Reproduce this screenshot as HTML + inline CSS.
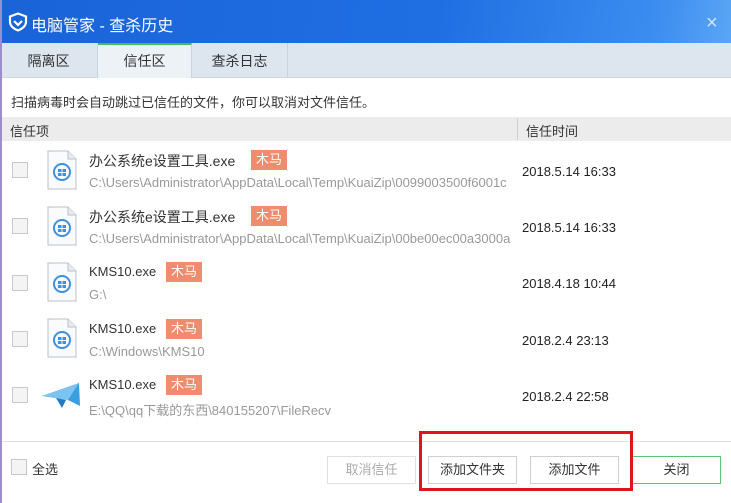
<!DOCTYPE html>
<html><head><meta charset="utf-8"><style>
*{margin:0;padding:0;box-sizing:border-box}
body{width:731px;height:503px;position:relative;overflow:hidden;background:#fff;font-family:"Liberation Sans","Noto Sans CJK SC",sans-serif;font-size:13px;color:#333}
.a{position:absolute;white-space:nowrap}
.title{left:0;top:0;width:731px;height:43px;background:linear-gradient(100deg,#1a63d8 0%,#1f6fe3 60%,#3d8ef0 90%,#5aa5f5 100%)}
.tabs{left:0;top:43px;width:731px;height:35px;background:#dde6ef;border-bottom:1px solid #cfd8e2}
.tab{top:43px;height:35px;line-height:36px;text-align:center;font-size:14px;color:#333}
.cb{width:16px;height:16px;border:1px solid #c8c8c8;background:#f4f4f4}
.tag{background:#f08c6e;color:#fff;font-size:13px;height:20px;line-height:20px;padding:0 5px}
.nm{font-size:14px;color:#333}
.nm2{font-size:13px;color:#333}
.pt{font-size:13px;color:#999;width:428px;overflow:hidden}
.dt{font-size:13px;color:#222}
.btn{top:456px;height:28px;line-height:26px;width:89px;text-align:center;border:1px solid #cfcfcf;background:#fff;font-size:13px}
</style></head><body>
<div class="a" style="left:0;top:0;width:2px;height:503px;background:#9c8fc9;z-index:5"></div>
<div class="a title"></div>
<svg class="a" style="left:8px;top:12px" width="20" height="20" viewBox="0 0 20 20"><path d="M10 1.5 L18 4.5 V10 C18 14 14 17 10 18.5 C6 17 2 14 2 10 V4.5Z" fill="none" stroke="#fff" stroke-width="2.2"/><path d="M6 9 L10 13 L14 9" fill="none" stroke="#fff" stroke-width="2.2"/></svg>
<div class="a" style="left:31px;top:12px;color:#fff;font-size:16px">电脑管家 - 查杀历史</div>
<div class="a" style="left:706px;top:12px;color:#cfe2fb;font-size:20px;font-weight:300">×</div>
<div class="a tabs"></div>
<div class="a tab" style="left:0;width:98px;border-right:1px solid #c9d3de">隔离区</div>
<div class="a tab" style="left:98px;width:94px;background:#edf2f7;border-top:2px solid #4cba5a;border-right:1px solid #c9d3de;line-height:33px">信任区</div>
<div class="a tab" style="left:192px;width:96px;border-right:1px solid #c9d3de">查杀日志</div>
<div class="a" style="left:11px;top:92px;font-size:13px">扫描病毒时会自动跳过已信任的文件，你可以取消对文件信任。</div>
<div class="a" style="left:0;top:117px;width:731px;height:24px;background:#ececec"></div>
<div class="a" style="left:10px;top:121px;font-size:13px">信任项</div>
<div class="a" style="left:517px;top:118px;width:1px;height:22px;background:#d0d0d0"></div>
<div class="a" style="left:526px;top:121px;font-size:13px">信任时间</div>

<div class="a cb" style="left:12px;top:162px"></div>
<div class="a cb" style="left:12px;top:218px"></div>
<div class="a cb" style="left:12px;top:275px"></div>
<div class="a cb" style="left:12px;top:331px"></div>
<div class="a cb" style="left:12px;top:387px"></div>

<svg class="a" style="left:46px;top:150px" width="32" height="40" viewBox="0 0 32 40"><path d="M2 1H22L30 9V39H2Z" fill="#fafbfc" stroke="#b8c2cc"/><path d="M22 1V9H30" fill="#e8edf2" stroke="#b8c2cc"/><circle cx="16" cy="22" r="8" fill="none" stroke="#3f8fe0" stroke-width="2"/><path d="M12 19h3.5v3h-3.5zM16.5 19h3.5v3h-3.5zM12 23h3.5v3h-3.5zM16.5 23h3.5v3h-3.5z" fill="#3f8fe0"/></svg>
<svg class="a" style="left:46px;top:206px" width="32" height="40" viewBox="0 0 32 40"><path d="M2 1H22L30 9V39H2Z" fill="#fafbfc" stroke="#b8c2cc"/><path d="M22 1V9H30" fill="#e8edf2" stroke="#b8c2cc"/><circle cx="16" cy="22" r="8" fill="none" stroke="#3f8fe0" stroke-width="2"/><path d="M12 19h3.5v3h-3.5zM16.5 19h3.5v3h-3.5zM12 23h3.5v3h-3.5zM16.5 23h3.5v3h-3.5z" fill="#3f8fe0"/></svg>
<svg class="a" style="left:46px;top:262px" width="32" height="40" viewBox="0 0 32 40"><path d="M2 1H22L30 9V39H2Z" fill="#fafbfc" stroke="#b8c2cc"/><path d="M22 1V9H30" fill="#e8edf2" stroke="#b8c2cc"/><circle cx="16" cy="22" r="8" fill="none" stroke="#3f8fe0" stroke-width="2"/><path d="M12 19h3.5v3h-3.5zM16.5 19h3.5v3h-3.5zM12 23h3.5v3h-3.5zM16.5 23h3.5v3h-3.5z" fill="#3f8fe0"/></svg>
<svg class="a" style="left:46px;top:318px" width="32" height="40" viewBox="0 0 32 40"><path d="M2 1H22L30 9V39H2Z" fill="#fafbfc" stroke="#b8c2cc"/><path d="M22 1V9H30" fill="#e8edf2" stroke="#b8c2cc"/><circle cx="16" cy="22" r="8" fill="none" stroke="#3f8fe0" stroke-width="2"/><path d="M12 19h3.5v3h-3.5zM16.5 19h3.5v3h-3.5zM12 23h3.5v3h-3.5zM16.5 23h3.5v3h-3.5z" fill="#3f8fe0"/></svg>
<svg class="a" style="left:42px;top:382px" width="38" height="28" viewBox="0 0 38 28"><path d="M0 14 L37 1 L38 24 L26 18 Z" fill="#3a9ee0"/><path d="M0 14 L26 18 L37 1Z" fill="#7cc4f0"/><path d="M14 16 L20 26 L24 18Z" fill="#1f7cc4"/></svg>

<div class="a nm" style="left:89px;top:151px">办公系统e设置工具.exe</div>
<div class="a tag" style="left:251px;top:150px">木马</div>
<div class="a pt" style="left:89px;top:175px">C:\Users\Administrator\AppData\Local\Temp\KuaiZip\0099003500f6001c</div>
<div class="a dt" style="left:522px;top:164px">2018.5.14 16:33</div>

<div class="a nm" style="left:89px;top:207px">办公系统e设置工具.exe</div>
<div class="a tag" style="left:251px;top:206px">木马</div>
<div class="a pt" style="left:89px;top:231px">C:\Users\Administrator\AppData\Local\Temp\KuaiZip\00be00ec00a3000a</div>
<div class="a dt" style="left:522px;top:220px">2018.5.14 16:33</div>

<div class="a nm2" style="left:89px;top:264px">KMS10.exe</div>
<div class="a tag" style="left:166px;top:262px">木马</div>
<div class="a pt" style="left:89px;top:287px">G:\</div>
<div class="a dt" style="left:522px;top:276px">2018.4.18 10:44</div>

<div class="a nm2" style="left:89px;top:321px">KMS10.exe</div>
<div class="a tag" style="left:166px;top:319px">木马</div>
<div class="a pt" style="left:89px;top:344px">C:\Windows\KMS10</div>
<div class="a dt" style="left:522px;top:333px">2018.2.4 23:13</div>

<div class="a nm2" style="left:89px;top:377px">KMS10.exe</div>
<div class="a tag" style="left:166px;top:375px">木马</div>
<div class="a pt" style="left:89px;top:400px">E:\QQ\qq下载的东西\840155207\FileRecv</div>
<div class="a dt" style="left:522px;top:389px">2018.2.4 22:58</div>

<div class="a" style="left:0;top:441px;width:731px;height:1px;background:#e2e2e2"></div>
<div class="a cb" style="left:11px;top:459px"></div>
<div class="a" style="left:32px;top:459px;font-size:13px">全选</div>
<div class="a btn" style="left:327px;color:#aaa;border-color:#e0e0e0">取消信任</div>
<div class="a btn" style="left:428px">添加文件夹</div>
<div class="a btn" style="left:530px">添加文件</div>
<div class="a btn" style="left:632px;border-color:#5cc46a">关闭</div>
<div class="a" style="left:419px;top:431px;width:214px;height:60px;border:3px solid #e0141a"></div>
</body></html>
